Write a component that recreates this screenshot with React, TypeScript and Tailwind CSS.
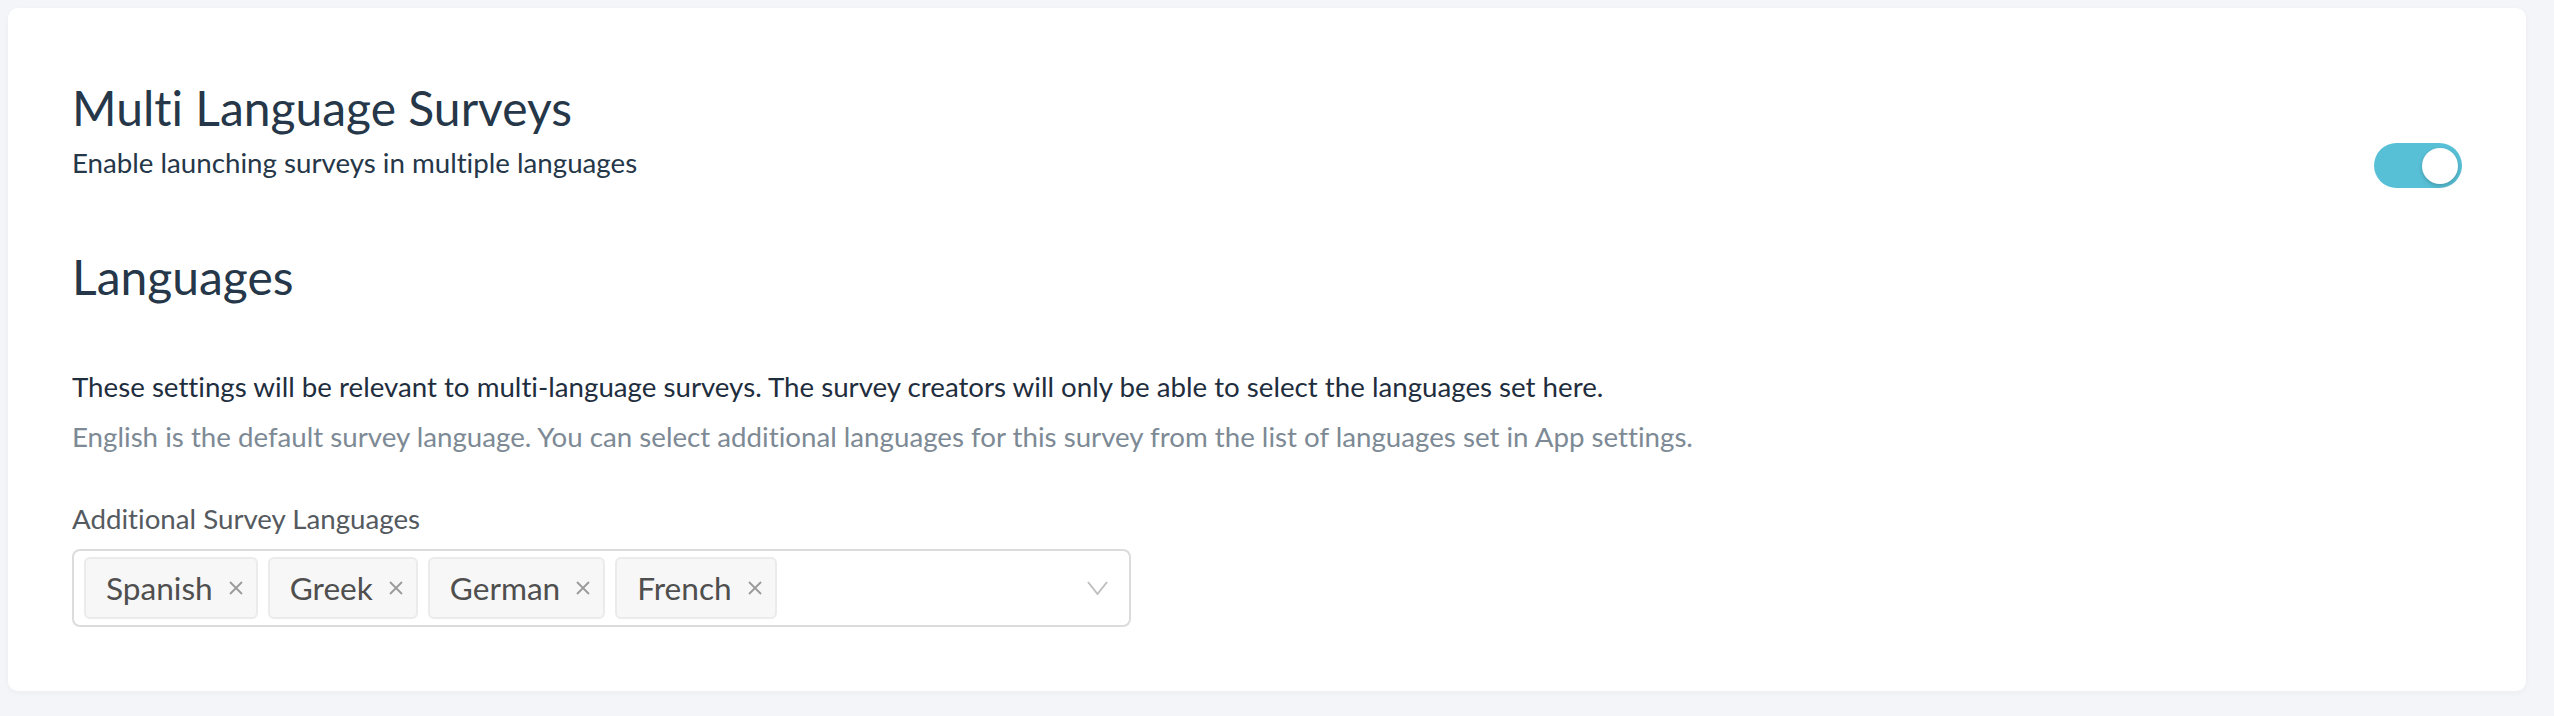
import React, { useState } from 'react';

const languages = ['Spanish', 'Greek', 'German', 'French'];

const Chip = ({ label, onRemove }: { label: string; onRemove: () => void }) => (
  <div className="flex h-[62px] items-center rounded-[6px] border-2 border-[#ebebeb] bg-[#f7f7f7] pl-[20px] pr-[12px]">
    <span className="text-[31.6px] leading-[38px] text-[#4f4f4f]">{label}</span>
    <button onClick={onRemove} className="ml-[15px] flex h-[20px] w-[16px] items-center justify-center">
      <svg width="14" height="14" viewBox="0 0 14 14" fill="none" stroke="#9a9a9a" strokeWidth="1.8">
        <path d="M1 1L13 13M13 1L1 13" />
      </svg>
    </button>
  </div>
);

const App = () => {
  const [enabled, setEnabled] = useState(true);
  const [selected, setSelected] = useState<string[]>(languages);

  return (
    <div className="min-h-screen bg-[#f4f5f9] pt-[8px] pl-[8px] font-['Lato',_sans-serif] [font-variant-ligatures:none]">
      <div className="w-[2518px] rounded-[10px] bg-white px-[64px] pt-[71px] pb-[64px] shadow-[0_2px_6px_rgba(30,40,60,0.04)]">
        <div className="flex items-start justify-between">
          <div>
            <h1 className="text-[48px] leading-[58px] text-[#253748]">Multi Language Surveys</h1>
            <p className="mt-[9px] text-[27.7px] leading-[34px] text-[#253748]">
              Enable launching surveys in multiple languages
            </p>
          </div>
          <button
            onClick={() => setEnabled(!enabled)}
            className={`mt-[64px] flex h-[45px] w-[88px] items-center rounded-full px-[4px] ${
              enabled ? 'justify-end bg-[#58c0d6]' : 'justify-start bg-[#d5d9de]'
            }`}
          >
            <span className="h-[36px] w-[36px] rounded-full bg-white shadow-[0_2px_4px_rgba(0,0,0,0.2)]" />
          </button>
        </div>

        <h2 className="mt-[60px] text-[48px] leading-[58px] text-[#253748]">Languages</h2>

        <p className="mt-[64px] text-[27.7px] leading-[34px] text-[#1f2e3e]">
          These settings will be relevant to multi-language surveys. The survey creators will only be able to select the languages set here.
        </p>
        <p className="mt-[16px] text-[27.7px] leading-[34px] text-[#7d8a95]">
          English is the default survey language. You can select additional languages for this survey from the list of languages set in App settings.
        </p>

        <label className="mt-[48px] block text-[27.7px] leading-[34px] text-[#555a5f]">Additional Survey Languages</label>
        <div className="mt-[13px] flex h-[78px] w-[1059px] items-center rounded-[8px] border-2 border-[#dcdcdc] pl-[10px] pr-[21px]">
          <div className="flex flex-1 gap-[10px]">
            {selected.map((l) => (
              <Chip key={l} label={l} onRemove={() => setSelected(selected.filter((s) => s !== l))} />
            ))}
          </div>
          <svg width="21" height="15" viewBox="0 0 21 15" fill="none" stroke="#bfbfbf" strokeWidth="2">
            <path d="M1 1L10.5 13L20 1" />
          </svg>
        </div>
      </div>
    </div>
  );
};

export default App;
